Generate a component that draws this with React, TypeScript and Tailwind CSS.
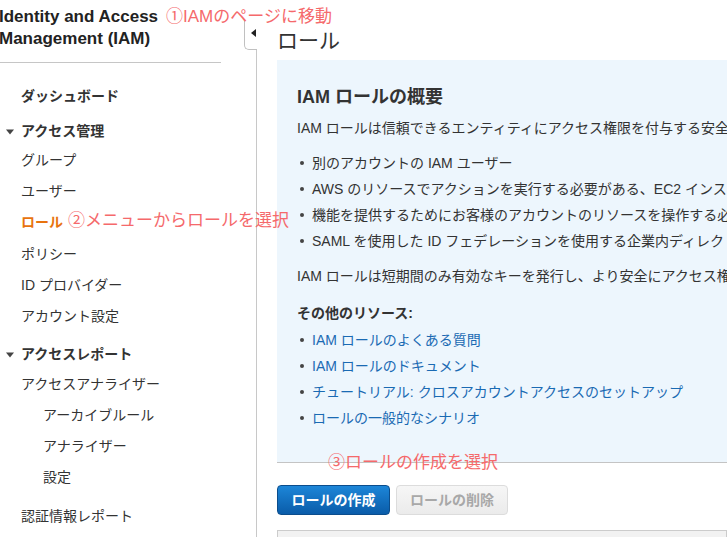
import React from "react";

const font = { fontFamily: '"Liberation Sans", "Noto Sans CJK JP", sans-serif' };

function Caret() {
  return (
    <svg width="8" height="6" viewBox="0 0 8 6" className="mr-[7px]">
      <path d="M0 0.5 L8 0.5 L4 5.5 Z" fill="#444" />
    </svg>
  );
}

type Item = { label: string; cls: string; kind?: "head" | "active" | "sub" | "bold" };

const items: Item[] = [
  { label: "ダッシュボード", cls: "", kind: "bold" },
  { label: "アクセス管理", cls: "mt-[4px]", kind: "head" },
  { label: "グループ", cls: "-mt-[2px]" },
  { label: "ユーザー", cls: "" },
  { label: "ロール", cls: "", kind: "active" },
  { label: "ポリシー", cls: "mt-[1px]" },
  { label: "ID プロバイダー", cls: "" },
  { label: "アカウント設定", cls: "" },
  { label: "アクセスレポート", cls: "mt-[7px]", kind: "head" },
  { label: "アクセスアナライザー", cls: "-mt-[1px]" },
  { label: "アーカイブルール", cls: "", kind: "sub" },
  { label: "アナライザー", cls: "", kind: "sub" },
  { label: "設定", cls: "", kind: "sub" },
  { label: "認証情報レポート", cls: "mt-[8px]" },
];

function NavItem({ it }: { it: Item }) {
  if (it.kind === "head") {
    return (
      <div className={`h-[31px] flex items-center pl-[6px] text-[14px] font-bold text-[#333] ${it.cls}`}>
        <Caret />
        {it.label}
      </div>
    );
  }
  const base = "h-[31px] flex items-center text-[14px]";
  if (it.kind === "active")
    return <div className={`${base} pl-[21px] font-bold text-[#e8730e] ${it.cls}`}>{it.label}</div>;
  if (it.kind === "bold")
    return <div className={`${base} pl-[21px] font-bold text-[#333] ${it.cls}`}>{it.label}</div>;
  if (it.kind === "sub")
    return <div className={`${base} pl-[43px] text-[#333] ${it.cls}`}>{it.label}</div>;
  return <div className={`${base} pl-[21px] text-[#333] ${it.cls}`}>{it.label}</div>;
}

function Bullet({ children, link }: { children: React.ReactNode; link?: boolean }) {
  return (
    <div className="h-[26px] flex items-center">
      <span className="w-[4px] h-[4px] rounded-full bg-[#444] ml-[3px] mr-[8px] shrink-0" />
      <span className={link ? "text-[#1a6ab3]" : "text-[#333]"}>{children}</span>
    </div>
  );
}

export default function App() {
  return (
    <div className="relative w-[727px] h-[537px] overflow-hidden bg-white flex" style={font}>
      {/* Sidebar */}
      <div className="relative w-[257px] shrink-0">
        <div className="pt-[6px] -ml-[1px] text-[17px] leading-[22px] font-bold text-[#222]">
          <div>Identity and Access</div>
          <div>Management (IAM)</div>
        </div>
        <div className="mt-[12px] w-[221px] border-t border-[#c6c6c6]" />
        <div className="mt-[18px] flex flex-col">
          {items.map((it) => (
            <NavItem key={it.label} it={it} />
          ))}
        </div>
        {/* divider line */}
        <div className="absolute right-0 top-[49px] bottom-0 w-px bg-[#c8c8c8]" />
        {/* collapse tab */}
        <div className="absolute left-[244px] top-[21px] w-[13px] h-[29px] border-l border-b border-[#c0c0c0] rounded-bl-[5px] flex items-start justify-end pt-[8px] pr-[1px]">
          <svg width="5" height="8" viewBox="0 0 5 8">
            <path d="M5 0 L5 8 L0 4 Z" fill="#222" />
          </svg>
        </div>
      </div>

      {/* Main */}
      <div className="flex-1 min-w-0 pl-[20px] whitespace-nowrap overflow-hidden">
        <div className="pt-[23px] h-[60px]">
          <div className="h-[36px] flex items-center text-[21px] text-[#333]">ロール</div>
        </div>
        <div className="h-[403px] bg-[#edf6fd] border-b border-[#c4c4c4] pl-[20px] pt-[25px] text-[14px]">
          <div className="h-[24px] flex items-center text-[18px] font-bold text-[#333]">IAM ロールの概要</div>
          <div className="mt-[9px] h-[20px] flex items-center text-[#333]">
            IAM ロールは信頼できるエンティティにアクセス権限を付与する安全な方法です。
          </div>
          <div className="mt-[12px]">
            <Bullet>別のアカウントの IAM ユーザー</Bullet>
            <Bullet>AWS のリソースでアクションを実行する必要がある、EC2 インスタンスで実行しているアプリケーション</Bullet>
            <Bullet>機能を提供するためにお客様のアカウントのリソースを操作する必要がある AWS のサービス</Bullet>
            <Bullet>SAML を使用した ID フェデレーションを使用する企業内ディレクトリのユーザー</Bullet>
          </div>
          <div className="mt-[12px] h-[20px] flex items-center text-[#333]">
            IAM ロールは短期間のみ有効なキーを発行し、より安全にアクセス権限を付与することができます。
          </div>
          <div className="mt-[17px] h-[20px] flex items-center font-bold text-[#333]">その他のリソース:</div>
          <div className="mt-[4px]">
            <Bullet link>IAM ロールのよくある質問</Bullet>
            <Bullet link>IAM ロールのドキュメント</Bullet>
            <Bullet link>チュートリアル: クロスアカウントアクセスのセットアップ</Bullet>
            <Bullet link>ロールの一般的なシナリオ</Bullet>
          </div>
        </div>
        <div className="mt-[22px] flex gap-[6px]">
          <button className="w-[113px] h-[30px] rounded-[4px] border border-[#0b4d8c] bg-gradient-to-b from-[#1d86d8] to-[#0a5ca9] text-white text-[14px] font-bold">
            ロールの作成
          </button>
          <button className="w-[112px] h-[30px] rounded-[4px] border border-[#dcdcdc] bg-gradient-to-b from-[#f6f6f6] to-[#ebebeb] text-[#a8a8a8] text-[14px] font-bold">
            ロールの削除
          </button>
        </div>
        <div className="mt-[15px] h-[30px] bg-[#f2f2f2] border border-[#cccccc]" />
      </div>

      {/* Annotations */}
      <div className="absolute left-[166px] top-[5px] text-[17px] text-[#f5696b] leading-[24px] whitespace-nowrap">
        ①IAMのページに移動
      </div>
      <div className="absolute left-[68px] top-[209px] text-[17px] text-[#f5696b] leading-[24px] whitespace-nowrap">
        ②メニューからロールを選択
      </div>
      <div className="absolute left-[328px] top-[451px] text-[17px] text-[#f5696b] leading-[24px] whitespace-nowrap">
        ③ロールの作成を選択
      </div>
    </div>
  );
}
